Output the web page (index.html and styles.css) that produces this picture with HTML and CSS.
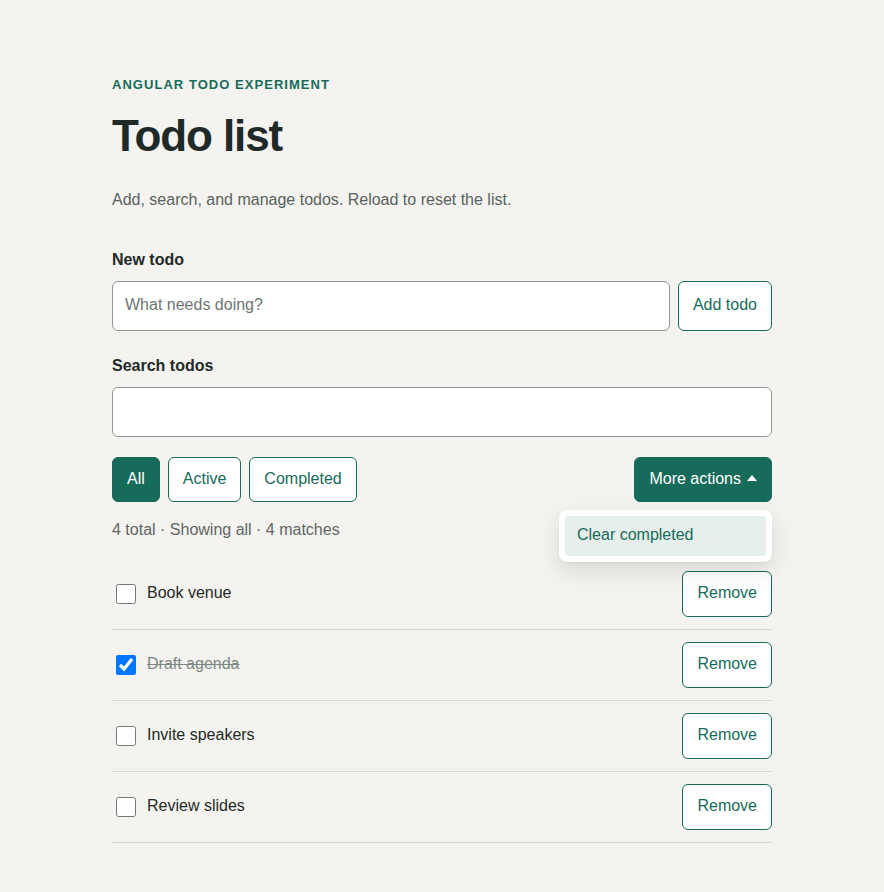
FILE: index.html
```html
<!DOCTYPE html>
<html lang="en">
  <head>
    <meta charset="UTF-8" />
    <meta name="viewport" content="width=device-width, initial-scale=1" />
    <title>Todo list</title>
    <link rel="stylesheet" href="styles.css">
  </head>
  <body>
    <main class="page">
      <p class="eyebrow">Angular todo experiment</p>
      <h1>Todo list</h1>
      <p class="intro">Add, search, and manage todos. Reload to reset the list.</p>

      <form class="field">
        <label for="new-todo">New todo</label>
        <div class="input-row">
          <input id="new-todo" placeholder="What needs doing?" autocomplete="off" />
          <button type="submit" class="btn">Add todo</button>
        </div>
      </form>

      <div class="field search">
        <label for="search">Search todos</label>
        <input id="search" autocomplete="off" />
      </div>

      <div class="toolbar">
        <div class="filters">
          <button class="btn active">All</button>
          <button class="btn">Active</button>
          <button class="btn">Completed</button>
        </div>
        <div class="actions">
          <button class="btn active more">More actions <span class="caret"></span></button>
          <div class="menu">
            <button class="menu-item">Clear completed</button>
          </div>
        </div>
      </div>

      <p class="status">4 total · Showing all · 4 matches</p>

      <ul class="todos">
        <li class="todo">
          <label class="todo-label">
            <input type="checkbox" />
            <span>Book venue</span>
          </label>
          <button class="btn">Remove</button>
        </li>
        <li class="todo done">
          <label class="todo-label">
            <input type="checkbox" checked />
            <span>Draft agenda</span>
          </label>
          <button class="btn">Remove</button>
        </li>
        <li class="todo">
          <label class="todo-label">
            <input type="checkbox" />
            <span>Invite speakers</span>
          </label>
          <button class="btn">Remove</button>
        </li>
        <li class="todo">
          <label class="todo-label">
            <input type="checkbox" />
            <span>Review slides</span>
          </label>
          <button class="btn">Remove</button>
        </li>
      </ul>
    </main>
  </body>
</html>
```

FILE: styles.css
```css
body {
  margin: 0;
  font-family: "Liberation Sans", Arial, sans-serif;
  background: #f4f3ef;
  color: #1f2a28;
}

.page {
  max-width: 660px;
  margin: 0 auto;
  padding: 76px 0 48px;
}

.eyebrow {
  margin: 0;
  font-size: 13px;
  line-height: 18px;
  font-weight: bold;
  letter-spacing: 0.08em;
  text-transform: uppercase;
  color: #176b5b;
}

h1 {
  margin: 18px 0 0;
  font-size: 44px;
  line-height: 1.1;
  letter-spacing: -0.025em;
  color: #1f2a28;
}

.intro {
  margin: 28px 0 0;
  font-size: 16px;
  line-height: 24px;
  color: #59625f;
}

.field {
  margin-top: 36px;
}

.field.search {
  margin-top: 23px;
}

.field label {
  display: block;
  margin-bottom: 9px;
  font-size: 16px;
  line-height: 24px;
  font-weight: bold;
}

.input-row {
  display: flex;
  gap: 8px;
}

.field input {
  flex: 1;
  box-sizing: border-box;
  width: 100%;
  height: 50px;
  padding: 0 12px 2px;
  background: #fff;
  border: 1px solid #8f9893;
  border-radius: 6px;
  font: inherit;
  font-size: 16px;
  color: #1f2a28;
}

.field input::placeholder {
  color: #6d7572;
}

.btn {
  padding: 0 14px 2px;
  background: #fff;
  border: 1px solid #176b5b;
  border-radius: 6px;
  font-family: inherit;
  font-size: 16px;
  color: #176b5b;
  cursor: pointer;
}

.btn.active {
  background: #176b5b;
  color: #fff;
}

.toolbar {
  display: flex;
  justify-content: space-between;
  margin-top: 20px;
}

.toolbar .btn {
  height: 45px;
}

.filters {
  display: flex;
  gap: 8px;
}

.actions {
  position: relative;
}

.more {
  display: flex;
  align-items: center;
  gap: 6px;
}

.caret {
  width: 0;
  height: 0;
  border-left: 5px solid transparent;
  border-right: 5px solid transparent;
  border-bottom: 6px solid #fff;
  margin-bottom: 1px;
}

.menu {
  position: absolute;
  top: calc(100% + 8px);
  right: 0;
  width: 213px;
  box-sizing: border-box;
  padding: 6px;
  background: #fff;
  border-radius: 8px;
  box-shadow: 0 8px 24px rgba(0, 0, 0, 0.12), 0 1px 2px rgba(0, 0, 0, 0.06);
  z-index: 2;
}

.menu-item {
  display: block;
  width: 100%;
  height: 40px;
  padding: 0 12px 2px;
  text-align: left;
  background: #e6efeb;
  border: none;
  border-radius: 4px;
  font-family: inherit;
  font-size: 16px;
  color: #176b5b;
}

.status {
  margin: 16px 0 0;
  font-size: 16px;
  line-height: 24px;
  color: #5f6764;
}

.todos {
  list-style: none;
  margin: 17px 0 0;
  padding: 0;
}

.todo {
  display: flex;
  align-items: center;
  justify-content: space-between;
  padding: 12px 0;
  border-bottom: 1px solid #d8d8d2;
}

.todo .btn {
  height: 46px;
}

.todo-label {
  display: flex;
  align-items: center;
  gap: 8px;
  font-size: 16px;
  color: #1f2a28;
}

.todo-label span {
  padding-bottom: 2px;
}

.todo-label input {
  width: 20px;
  height: 20px;
  margin: 0 3px 0 4px;
}

.todo.done .todo-label span {
  color: #7d8884;
  text-decoration: line-through;
}
```
